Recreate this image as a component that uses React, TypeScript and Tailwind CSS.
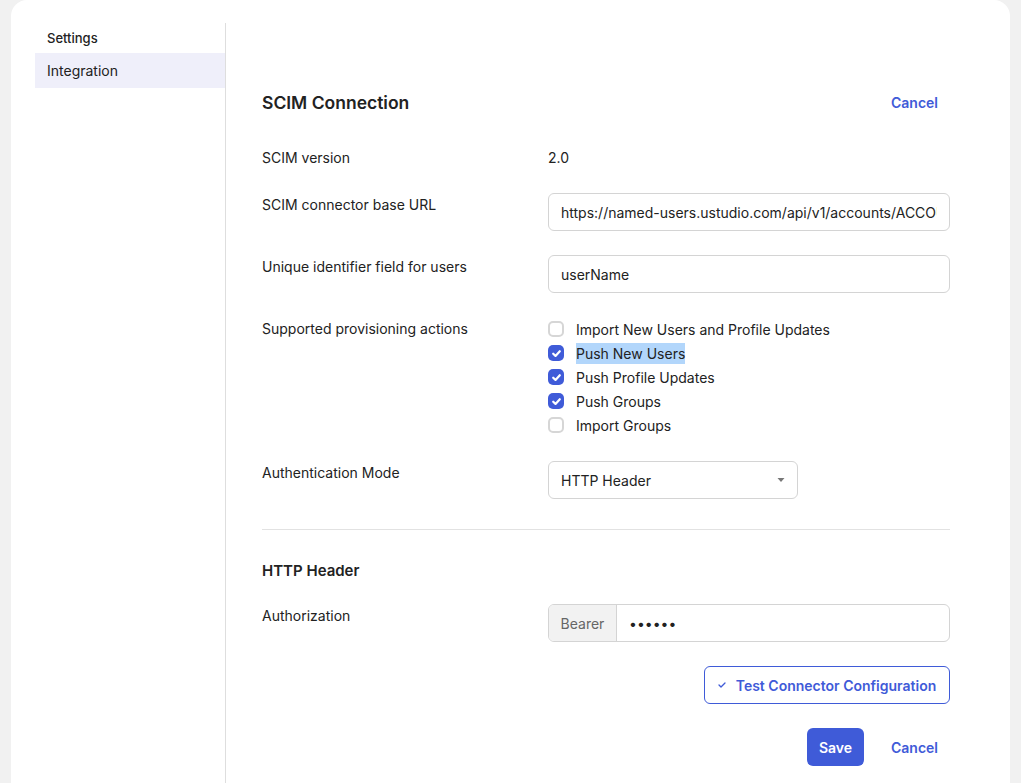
import { useState } from 'react'

const blue = 'text-[#3f5bd8]'

const actions = [
    { label: 'Import New Users and Profile Updates', checked: false },
    { label: 'Push New Users', checked: true, selected: true },
    { label: 'Push Profile Updates', checked: true },
    { label: 'Push Groups', checked: true },
    { label: 'Import Groups', checked: false },
]

const Check = ({ checked }: { checked: boolean }) =>
    checked ? (
        <span className="w-4 h-4 rounded-[5px] bg-[#3f5bd8] flex items-center justify-center">
            <svg width="11" height="11" viewBox="0 0 10 10" fill="none">
                <path d="M2 5.2L4.1 7.2L8 2.9" stroke="white" strokeWidth="2" strokeLinecap="round" strokeLinejoin="round" />
            </svg>
        </span>
    ) : (
        <span className="w-4 h-4 rounded-[5px] border-2 border-[#d6d6d6] bg-white" />
    )

const Row = ({ label, children, className = '' }: { label: string; children: React.ReactNode; className?: string }) => (
    <div className={`flex ${className}`}>
        <div className="w-[286px] shrink-0 pt-[2px] leading-5">{label}</div>
        <div className="flex-1">{children}</div>
    </div>
)

const inputCls = 'w-full h-[38px] px-3 rounded-md border border-[#d4d4d4] bg-white text-[14px] text-[#222] outline-none'

export default function App() {
    const [url] = useState('https://named-users.ustudio.com/api/v1/accounts/ACCOUNT_ID/scim/v2')

    return (
        <div className="min-h-[783px] bg-[#f1f1f1] px-[11px] text-[14px] text-[#222] font-['Inter',sans-serif]">
            <div className="bg-white rounded-t-2xl min-h-[783px] flex pl-6 pt-[23px]">
                <aside className="w-[190px] shrink-0">
                    <div className="h-[30px] px-3 flex items-center pt-[2px] font-medium text-[13px]">Settings</div>
                    <div className="h-[35px] px-3 flex items-center bg-[#efeffa] text-[14px]">Integration</div>
                </aside>
                <div className="w-px bg-[#dedede]" />
                <main className="pl-9 w-[724px]">
                    <div className="mt-[60px] h-[38px] flex items-center justify-between">
                        <h1 className="text-[17.5px] font-semibold pt-[2px]">SCIM Connection</h1>
                        <button className={`px-3 h-[38px] font-semibold ${blue}`}>Cancel</button>
                    </div>

                    <Row label="SCIM version" className="mt-[25px]">
                        <div className="pt-[2px] leading-5">2.0</div>
                    </Row>

                    <Row label="SCIM connector base URL" className="mt-[25px]">
                        <input className={inputCls} value={url} readOnly />
                    </Row>

                    <Row label="Unique identifier field for users" className="mt-6">
                        <input className={inputCls} value="userName" readOnly />
                    </Row>

                    <Row label="Supported provisioning actions" className="mt-6">
                        <div className="flex flex-col">
                            {actions.map((a) => (
                                <label key={a.label} className="h-6 flex items-center gap-3">
                                    <Check checked={a.checked} />
                                    <span className={a.selected ? 'bg-[#b2d6fb]' : ''}>{a.label}</span>
                                </label>
                            ))}
                        </div>
                    </Row>

                    <Row label="Authentication Mode" className="mt-6">
                        <div className="w-[250px] h-[38px] px-3 rounded-md border border-[#d4d4d4] flex items-center justify-between">
                            <span>HTTP Header</span>
                            <svg width="8" height="6" viewBox="0 0 8 6">
                                <path d="M0.5 1L4 5L7.5 1Z" fill="#777" />
                            </svg>
                        </div>
                    </Row>

                    <div className="mt-[30px] h-px bg-[#e2e2e2]" />

                    <h2 className="mt-[30px] text-[15px] leading-[22px] font-semibold">HTTP Header</h2>

                    <Row label="Authorization" className="mt-[22px]">
                        <div className="h-[38px] rounded-md border border-[#d4d4d4] flex overflow-hidden">
                            <span className="w-[68px] bg-[#f2f2f2] border-r border-[#d4d4d4] flex items-center justify-center text-[#666]">Bearer</span>
                            <span className="flex-1 flex items-center pl-3 text-[14px]">••••••</span>
                        </div>
                    </Row>

                    <div className="mt-6 flex justify-end">
                        <button className={`w-[246px] h-[38px] rounded-md border border-[#3f5bd8] flex items-center justify-center gap-[10px] font-semibold ${blue}`}>
                            <svg width="8" height="6" viewBox="0 0 8 6" fill="none">
                                <path d="M1 3L3 5L7 1" stroke="#3f5bd8" strokeWidth="1.3" strokeLinecap="round" strokeLinejoin="round" />
                            </svg>
                            Test Connector Configuration
                        </button>
                    </div>

                    <div className="mt-6 flex justify-end items-center gap-[15px]">
                        <button className="w-[57px] h-[38px] rounded-md bg-[#3f5bd8] text-white font-semibold">Save</button>
                        <button className={`px-3 h-[38px] font-semibold ${blue}`}>Cancel</button>
                    </div>
                </main>
            </div>
        </div>
    )
}
